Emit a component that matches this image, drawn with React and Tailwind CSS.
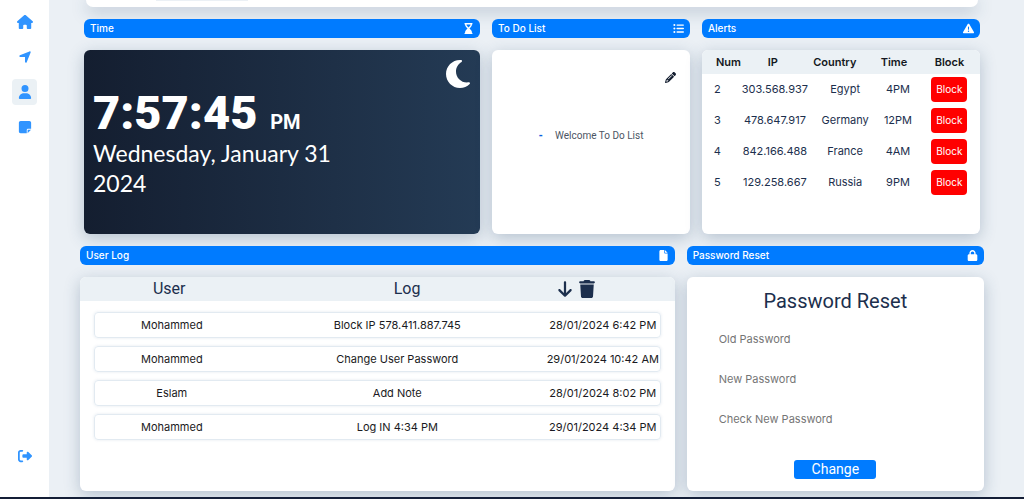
import {
  FaHouse,
  FaLocationArrow,
  FaUser,
  FaNoteSticky,
  FaRightFromBracket,
  FaHourglassEnd,
  FaListUl,
  FaTriangleExclamation,
  FaFile,
  FaLock,
  FaMoon,
  FaPencil,
  FaArrowDown,
  FaTrash,
} from "react-icons/fa6";

const nav = [
  { label: "Home", Icon: FaHouse },
  { label: "Send", Icon: FaLocationArrow },
  { label: "User", Icon: FaUser, active: true },
  { label: "Notes", Icon: FaNoteSticky },
];

const alerts = [
  { num: 2, ip: "303.568.937", country: "Egypt", time: "4PM" },
  { num: 3, ip: "478.647.917", country: "Germany", time: "12PM" },
  { num: 4, ip: "842.166.488", country: "France", time: "4AM" },
  { num: 5, ip: "129.258.667", country: "Russia", time: "9PM" },
];

const logs = [
  { user: "Mohammed", log: "Block IP 578.411.887.745", date: "28/01/2024 6:42 PM" },
  { user: "Mohammed", log: "Change User Password", date: "29/01/2024 10:42 AM" },
  { user: "Eslam", log: "Add Note", date: "28/01/2024 8:02 PM" },
  { user: "Mohammed", log: "Log IN 4:34 PM", date: "29/01/2024 4:34 PM" },
];

const fields = ["Old Password", "New Password", "Check New Password"];

function Panel({ title, Icon, className = "", children }) {
  return (
    <section className="flex min-w-0 flex-col gap-3">
      <header className="flex h-[19px] items-center justify-between rounded-md bg-[#007bff] px-1.5 text-white">
        <h2 className="font-[Inter,sans-serif] text-[10px] leading-[19px] font-medium">{title}</h2>
        <Icon className="size-[11px]" />
      </header>
      <div
        className={`flex flex-1 flex-col overflow-hidden rounded-md shadow-[0_4px_16px_rgba(44,74,110,0.28)] ${className}`}
      >
        {children}
      </div>
    </section>
  );
}

function NavLink({ label, Icon, active }) {
  return (
    <a
      href="#"
      aria-label={label}
      className={`flex h-[26px] w-[25px] items-center justify-center rounded text-[#3094ff] ${active ? "bg-[#ebf1f5]" : ""}`}
    >
      <Icon className={Icon === FaHouse ? "size-4" : "size-[14px]"} />
    </a>
  );
}

export default function App() {
  return (
    <div className="flex min-h-screen flex-col border-b-2 border-[#141e36] bg-[#ebf0f5] font-[Roboto,sans-serif] text-[#1c2f4d]">
      <div className="flex flex-1">
        <nav className="flex w-[49px] shrink-0 flex-col items-center gap-[9px] bg-white pt-[9px] pb-[28px]">
          {nav.map((item) => (
            <NavLink key={item.label} {...item} />
          ))}
          <div className="mt-auto">
            <NavLink label="Log out" Icon={FaRightFromBracket} />
          </div>
        </nav>

        <main className="flex min-w-0 flex-1 flex-col pr-10 pb-1.5 pl-[31px]">
          <div className="mx-1.5 h-[7px] rounded-b-xl bg-white shadow-[0_4px_16px_rgba(44,74,110,0.35)]">
            <div className="ml-[70px] h-px w-[92px] bg-[#ebf0f5]" />
          </div>

          <div className="mx-1 mt-3 grid h-[215px] grid-cols-[396fr_198fr_278fr] gap-3">
            <Panel
              title="Time"
              Icon={FaHourglassEnd}
              className="bg-linear-to-r from-[#141e30] to-[#243b55] text-white"
            >
              <FaMoon className="mt-2 mr-1.5 size-8 self-end" />
              <div className="px-[9px] pt-[7px]">
                <p className="text-[47px] leading-8 font-black">
                  7:57:45 <span className="ml-px text-[20px] font-bold">PM</span>
                </p>
                <p className="w-[240px] font-[Lato,sans-serif] text-[23px] leading-[30px]">
                  Wednesday, January 31 2024
                </p>
              </div>
            </Panel>

            <Panel title="To Do List" Icon={FaListUl} className="bg-white">
              <button
                type="button"
                aria-label="Edit list"
                className="mt-[22px] mr-3.5 self-end text-[#141e30]"
              >
                <FaPencil className="size-[11px]" />
              </button>
              <ul className="mt-[45px] text-[10px] leading-4 text-[#4b5563]">
                <li className="flex justify-center gap-3">
                  <span className="font-black text-[#0d5fe0]">-</span>
                  Welcome To Do List
                </li>
              </ul>
            </Panel>

            <Panel title="Alerts" Icon={FaTriangleExclamation} className="bg-white">
              <table className="w-full table-fixed text-center font-[Inter,sans-serif] text-[11px]">
                <colgroup>
                  <col className="w-[11%]" />
                  <col className="w-[29%]" />
                  <col className="w-[23%]" />
                  <col className="w-[15%]" />
                  <col className="w-[22%]" />
                </colgroup>
                <thead className="bg-[#ebf1f5] text-[#141821]">
                  <tr className="h-6">
                    <th className="pl-3.5 font-semibold">Num</th>
                    <th className="font-semibold">IP</th>
                    <th className="pr-6 font-semibold">Country</th>
                    <th className="pr-2 font-semibold">Time</th>
                    <th className="font-semibold">Block</th>
                  </tr>
                </thead>
                <tbody>
                  {alerts.map((a) => (
                    <tr key={a.num} className="h-[31px]">
                      <td>{a.num}</td>
                      <td className="pl-1">{a.ip}</td>
                      <td>{a.country}</td>
                      <td>{a.time}</td>
                      <td>
                        <button
                          type="button"
                          className="h-[25px] w-9 rounded bg-[#ff0000] text-[10px] text-white"
                        >
                          Block
                        </button>
                      </td>
                    </tr>
                  ))}
                </tbody>
              </table>
            </Panel>
          </div>

          <div className="mt-3 grid flex-1 grid-cols-[2fr_1fr] gap-3">
            <Panel title="User Log" Icon={FaFile} className="bg-white">
              <div className="grid h-6 shrink-0 grid-cols-[30fr_50fr_20fr] items-center bg-[#ebf1f5] text-center text-[16px]">
                <h3>User</h3>
                <h3>Log</h3>
                <div className="flex items-center gap-1">
                  <button type="button" aria-label="Sort">
                    <FaArrowDown className="size-[18px]" />
                  </button>
                  <button type="button" aria-label="Delete">
                    <FaTrash className="size-[18px]" />
                  </button>
                </div>
              </div>
              <ul className="mx-3.5 mt-[11px] flex flex-col gap-2 font-[Inter,sans-serif] text-[11px] text-[#1a1a22]">
                {logs.map((l) => (
                  <li
                    key={l.date}
                    className="grid h-[26px] grid-cols-[154fr_298fr_114fr] items-center rounded border border-[#e2eaf1] text-center shadow-[0_0_3px_rgba(120,150,180,0.2)]"
                  >
                    <span>{l.user}</span>
                    <span>{l.log}</span>
                    <span className="whitespace-nowrap">{l.date}</span>
                  </li>
                ))}
              </ul>
            </Panel>

            <Panel title="Password Reset" Icon={FaLock} className="bg-white">
              <form className="flex flex-1 flex-col items-center pt-3 pb-3">
                <h3 className="text-[20px] leading-6">Password Reset</h3>
                <div className="mt-3.5 flex w-full flex-col gap-4 px-8">
                  {fields.map((f) => (
                    <input
                      key={f}
                      type="password"
                      aria-label={f}
                      placeholder={f}
                      className="h-6 w-full font-[Inter,sans-serif] text-[11px] outline-none placeholder:text-[#757575]"
                    />
                  ))}
                </div>
                <button
                  type="button"
                  className="mt-auto h-[19px] w-[82px] rounded-[3px] bg-[#007bff] text-[14px] leading-[19px] text-white"
                >
                  Change
                </button>
              </form>
            </Panel>
          </div>
        </main>
      </div>
    </div>
  );
}
